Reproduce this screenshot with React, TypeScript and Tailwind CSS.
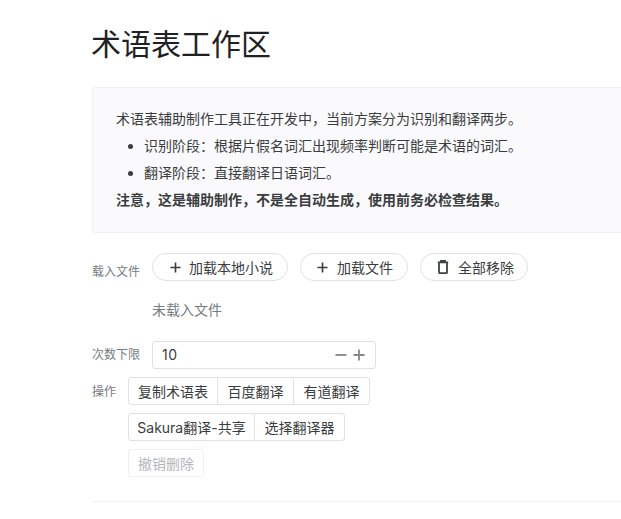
import React from "react";

function Plus({ className = "" }: { className?: string }) {
  return (
    <svg viewBox="0 0 12 12" className={className} fill="none" stroke="currentColor" strokeWidth="1.8">
      <path d="M6 0.5v11M0.5 6h11" />
    </svg>
  );
}

function Trash() {
  return (
    <svg viewBox="0 0 12 14" className="w-3 h-[14px] text-[#3f4245]" fill="none" stroke="currentColor" strokeWidth="1.8">
      <path d="M0.8 2.4h10.4M4 2.2V0.8h4v1.4M2 3v9.2q0 1 1 1h6q1 0 1-1V3" />
    </svg>
  );
}

function Pill({ icon, label, w }: { icon: React.ReactNode; label: string; w: string }) {
  return (
    <button className={`h-7 rounded-full border border-[#e0e0e6] bg-white flex items-center justify-start text-[14px] text-[#3a3d40] ${w}`}>
      {icon}
      <span>{label}</span>
    </button>
  );
}

function Seg({ label, className = "" }: { label: string; className?: string }) {
  return (
    <button className={`h-7 flex items-center justify-center text-[14px] text-[#3a3d40] border border-[#e0e0e6] bg-white whitespace-nowrap ${className}`}>
      {label}
    </button>
  );
}

export default function App() {
  return (
    <div className="w-[621px] h-[519px] overflow-hidden bg-white font-['Inter','Noto_Sans_CJK_SC',sans-serif] text-[14px] text-[#3a3d40]">
      <div className="w-[700px] ml-[92px]">
        <h1 className="pt-[22px] h-[87px] text-[30px] leading-[44px] font-normal text-[#1f2225] -ml-[1px]">术语表工作区</h1>

        <div className="w-[600px] h-[146px] rounded-[3px] border border-[#efeff5] bg-[#fafafc] pl-[23px] pt-[19px]">
          <p className="leading-[24px]">术语表辅助制作工具正在开发中，当前方案分为识别和翻译两步。</p>
          <ul className="list-disc pl-[28px] mt-[3px] flex flex-col gap-[3px]">
            <li className="leading-[24px]">识别阶段：根据片假名词汇出现频率判断可能是术语的词汇。</li>
            <li className="leading-[24px]">翻译阶段：直接翻译日语词汇。</li>
          </ul>
          <p className="leading-[24px] mt-[3px] font-bold">注意，这是辅助制作，不是全自动生成，使用前务必检查结果。</p>
        </div>

        <div className="mt-[20px] flex">
          <div className="w-[60px] pt-[10px] text-[12px] leading-[18px] text-[#767c82]">载入文件</div>
          <div className="flex gap-3">
            <Pill w="w-[136px] pl-[17px] gap-[8px]" label="加载本地小说" icon={<Plus className="w-[11px] h-[11px]" />} />
            <Pill w="w-[108px] pl-[16px] gap-[9px]" label="加载文件" icon={<Plus className="w-[11px] h-[11px]" />} />
            <Pill w="w-[108px] pl-[16px] gap-[9px]" label="全部移除" icon={<Trash />} />
          </div>
        </div>

        <div className="ml-[60px] mt-[18px] leading-[22px] text-[#767c82]">未载入文件</div>

        <div className="mt-[20px] flex items-center">
          <div className="w-[60px] text-[12px] leading-[18px] text-[#767c82]">次数下限</div>
          <div className="w-[224px] h-7 rounded-[3px] border border-[#e0e0e6] flex items-center pl-[9px] pr-[10px]">
            <span className="flex-1 leading-[22px] tracking-[0.5px]">10</span>
            <div className="flex items-center gap-[6px] text-[#85878a]">
              <svg viewBox="0 0 12 12" className="w-3 h-3" fill="none" stroke="currentColor" strokeWidth="1.8"><path d="M0.5 6h11" /></svg>
              <Plus className="w-3 h-3" />
            </div>
          </div>
        </div>

        <div className="mt-[8px] flex">
          <div className="w-[36px] pt-[6px] text-[12px] leading-[18px] text-[#767c82]">操作</div>
          <div className="flex flex-col gap-2">
            <div className="flex">
              <Seg label="复制术语表" className="w-[90px] rounded-l-[3px]" />
              <Seg label="百度翻译" className="w-[77px] -ml-px" />
              <Seg label="有道翻译" className="w-[77px] -ml-px rounded-r-[3px]" />
            </div>
            <div className="flex">
              <Seg label="Sakura翻译-共享" className="w-[127px] rounded-l-[3px]" />
              <Seg label="选择翻译器" className="w-[91px] -ml-px rounded-r-[3px]" />
            </div>
            <div className="flex">
              <button disabled className="h-7 w-[76px] flex items-center justify-center text-[14px] text-[#b4b6b9] border border-[#efeff2] rounded-[3px] bg-white">撤销删除</button>
            </div>
          </div>
        </div>

        <div className="mt-6 h-px w-[600px] bg-[#efeff5]" />
      </div>
    </div>
  );
}
